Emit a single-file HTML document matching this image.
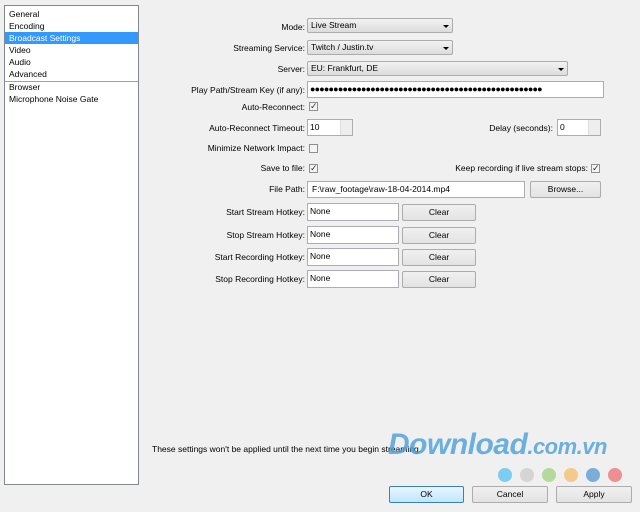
<!DOCTYPE html>
<html><head><style>
body{margin:0;width:640px;height:512px;background:#f0f0f0;font-family:"Liberation Sans",sans-serif;font-size:8.5px;color:#000;position:relative;overflow:hidden}
.a{position:absolute}
.list{left:4px;top:5px;width:133px;height:478px;background:#fff;border:1px solid #828790}
.it{position:absolute;left:4px;height:12px;line-height:12px;width:129px}
.sel{background:#3399ff;color:#fff;left:0;padding-left:4px}
.lab{position:absolute;text-align:right;width:300px;line-height:12px}
.cb{position:absolute;width:16px;height:15px;border:1px solid #acacac;border-radius:2px;background:linear-gradient(#f2f2f2,#dcdcdc);box-sizing:border-box;line-height:13px;padding-left:3px}
.cb:after{content:"";position:absolute;right:3px;top:6px;border-left:3px solid transparent;border-right:3px solid transparent;border-top:3px solid #000}
.inp{position:absolute;background:#fff;border:1px solid #abadb3;box-sizing:border-box;line-height:14px;padding-left:2px}
.chk{position:absolute;width:9px;height:9px;border:1px solid #8e8f8f;background:#f4f4f4;box-sizing:border-box;font-size:9px;line-height:7px;text-align:center;color:#334}
.btn{position:absolute;border:1px solid #acacac;border-radius:2px;background:linear-gradient(#f0f0f0,#e3e3e3);box-sizing:border-box;text-align:center;line-height:15px}
.spin{position:absolute;width:11px;border-left:1px solid #ddd;top:0;bottom:0;right:0;background:#eee}
</style></head><body>
<div class="a list">
<div class="it" style="top:2px">General</div>
<div class="it" style="top:14px">Encoding</div>
<div class="it sel" style="top:26px">Broadcast Settings</div>
<div class="it" style="top:38px">Video</div>
<div class="it" style="top:50px">Audio</div>
<div class="it" style="top:62px">Advanced</div>
<div class="a" style="top:75px;left:0;width:133px;height:1px;background:#a0a0a0"></div>
<div class="it" style="top:75px">Browser</div>
<div class="it" style="top:87px">Microphone Noise Gate</div>
</div>

<div class="lab" style="left:5px;top:21px">Mode:</div>
<div class="cb" style="left:307px;top:18px;width:146px">Live Stream</div>
<div class="lab" style="left:5px;top:42px">Streaming Service:</div>
<div class="cb" style="left:307px;top:40px;width:146px">Twitch / Justin.tv</div>
<div class="lab" style="left:5px;top:63px">Server:</div>
<div class="cb" style="left:307px;top:61px;width:261px">EU: Frankfurt, DE</div>
<div class="lab" style="left:5px;top:84px">Play Path/Stream Key (if any):</div>
<div class="inp" style="left:307px;top:81px;width:297px;height:17px;font-size:9px;letter-spacing:-0.8px;line-height:15px">●●●●●●●●●●●●●●●●●●●●●●●●●●●●●●●●●●●●●●●●●●●●●●●●●●</div>
<div class="lab" style="left:5px;top:101px">Auto-Reconnect:</div>
<div class="chk" style="left:309px;top:102px">✓</div>
<div class="lab" style="left:5px;top:122px">Auto-Reconnect Timeout:</div>
<div class="inp" style="left:307px;top:119px;width:46px;height:17px">10<div class="spin"></div></div>
<div class="lab" style="left:253px;top:122px">Delay (seconds):</div>
<div class="inp" style="left:557px;top:119px;width:44px;height:17px">0<div class="spin"></div></div>
<div class="lab" style="left:5px;top:142px">Minimize Network Impact:</div>
<div class="chk" style="left:309px;top:144px"></div>
<div class="lab" style="left:5px;top:162px">Save to file:</div>
<div class="chk" style="left:309px;top:164px">✓</div>
<div class="lab" style="left:288px;top:162px">Keep recording if live stream stops:</div>
<div class="chk" style="left:591px;top:164px">✓</div>
<div class="lab" style="left:5px;top:183px">File Path:</div>
<div class="inp" style="left:307px;top:181px;width:218px;height:17px;padding-left:4px">F:\raw_footage\raw-18-04-2014.mp4</div>
<div class="btn" style="left:530px;top:181px;width:71px;height:17px">Browse...</div>

<div class="lab" style="left:5px;top:206px">Start Stream Hotkey:</div>
<div class="inp" style="left:307px;top:203px;width:92px;height:18px">None</div>
<div class="btn" style="left:402px;top:204px;width:74px;height:17px">Clear</div>
<div class="lab" style="left:5px;top:229px">Stop Stream Hotkey:</div>
<div class="inp" style="left:307px;top:226px;width:92px;height:18px">None</div>
<div class="btn" style="left:402px;top:227px;width:74px;height:17px">Clear</div>
<div class="lab" style="left:5px;top:251px">Start Recording Hotkey:</div>
<div class="inp" style="left:307px;top:248px;width:92px;height:18px">None</div>
<div class="btn" style="left:402px;top:249px;width:74px;height:17px">Clear</div>
<div class="lab" style="left:5px;top:273px">Stop Recording Hotkey:</div>
<div class="inp" style="left:307px;top:270px;width:92px;height:18px">None</div>
<div class="btn" style="left:402px;top:271px;width:74px;height:17px">Clear</div>

<div class="a" style="left:152px;top:444px">These settings won't be applied until the next time you begin streaming.</div>
<div class="a" style="left:388px;top:428px;font-size:30px;font-weight:bold;font-style:italic;color:#4a9fd8;opacity:.8;letter-spacing:-0.5px;white-space:nowrap">Download<span style="font-size:22px">.com.vn</span></div>
<svg class="a" style="left:490px;top:466px" width="140" height="18">
<circle cx="15" cy="9" r="7" fill="#7dcdf0"/><circle cx="37" cy="9" r="7" fill="#d5d5d5"/><circle cx="59" cy="9" r="7" fill="#b5d99a"/><circle cx="81" cy="9" r="7" fill="#f5c98a"/><circle cx="103" cy="9" r="7" fill="#7aaed9"/><circle cx="125" cy="9" r="7" fill="#ee8f94"/></svg>
<div class="btn" style="left:389px;top:486px;width:75px;height:17px;border-color:#3c7fb1;background:linear-gradient(#eaf6fd,#bee6fd)">OK</div>
<div class="btn" style="left:472px;top:486px;width:76px;height:17px">Cancel</div>
<div class="btn" style="left:556px;top:486px;width:76px;height:17px">Apply</div>
</body></html>
